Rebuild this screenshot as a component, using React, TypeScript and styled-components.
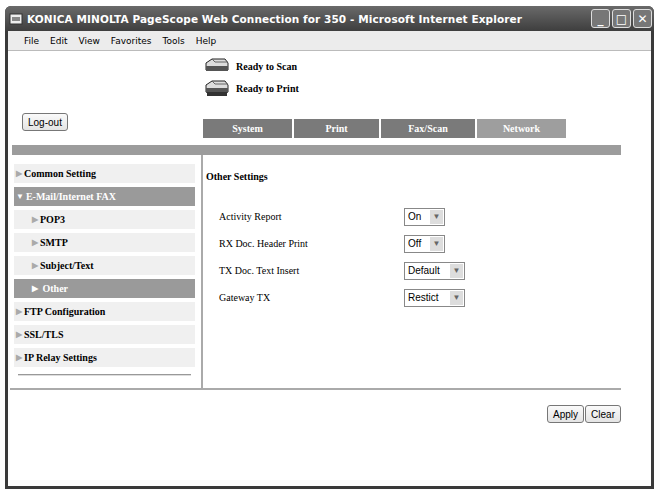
import React from 'react'
import styled, { createGlobalStyle } from 'styled-components'

const Global = createGlobalStyle`
  html, body { margin: 0; padding: 0; background: #fff; }
  body { width: 659px; height: 490px; overflow: hidden; }
`
const Window = styled.div`
  position: relative;
  margin: 6px 0 0 5px;
  width: 649px;
  height: 483px;
  background: #3a3a3a;
  border-radius: 6px 6px 0 0;
  padding: 0 3px 3px 3px;
  box-sizing: border-box;
  display: flex;
  flex-direction: column;
`
const TitleBar = styled.div`
  height: 25px;
  display: flex;
  align-items: center;
  padding-left: 4px;
  background: linear-gradient(#6a6a6a, #3e3e3e);
  border-radius: 6px 6px 0 0;
  margin: 0 -3px;
`
const TitleText = styled.div`
  font-family: "DejaVu Sans", sans-serif;
  font-weight: bold;
  font-size: 10.5px;
  color: #fff;
  margin-left: 4px;
  flex: 1;
  letter-spacing: 0.1px;
`
const WinBtn = styled.div`
  width: 17px;
  height: 17px;
  border: 1px solid #ddd;
  border-radius: 3px;
  background: #777;
  margin-right: 2px;
  color: #fff;
  font: bold 12px "DejaVu Sans", sans-serif;
  display: flex;
  align-items: center;
  justify-content: center;
`
const MenuBar = styled.div`
  height: 19px;
  background: #ececec;
  border-bottom: 1px solid #bbb;
  display: flex;
  align-items: center;
  padding-left: 16px;
  gap: 11px;
  font: 9px "DejaVu Sans", sans-serif;
  color: #000;
`
const Page = styled.div`
  flex: 1;
  background: #fff;
  font-family: "Liberation Serif", serif;
  display: flex;
  flex-direction: column;
`
const Header = styled.div`
  display: flex;
  height: 94px;
`
const LogoutCell = styled.div`
  width: 195px;
  display: flex;
  align-items: flex-end;
  padding: 0 0 14px 14px;
  box-sizing: border-box;
`
const Btn = styled.button`
  font: 10px "Liberation Sans", sans-serif;
  background: linear-gradient(#fafafa, #e4e4e4);
  border: 1px solid #777;
  border-radius: 3px;
  padding: 2px 5px;
  height: 18px;
`
const HeadRight = styled.div`
  display: flex;
  flex-direction: column;
  padding-top: 4px;
`
const Status = styled.div`
  display: flex;
  align-items: center;
  gap: 6px;
  height: 22px;
  font-weight: bold;
  font-size: 10px;
`
const Tabs = styled.div`
  display: flex;
  gap: 2px;
  margin-top: 20px;
`
const Tab = styled.div<{ w: number; light?: boolean }>`
  width: ${p => p.w}px;
  height: 19px;
  background: ${p => (p.light ? '#9e9e9e' : '#7a7a7a')};
  color: #fff;
  font-weight: bold;
  font-size: 10px;
  display: flex;
  align-items: center;
  justify-content: center;
`
const Bar = styled.div`
  height: 10px;
  background: #9c9c9c;
  margin: 0 30px 0 4px;
`
const Body = styled.div`
  display: flex;
  margin: 0 30px 0 2px;
  border-bottom: 2px solid #aaa;
`
const Nav = styled.div`
  width: 193px;
  border-right: 2px solid #aaa;
  padding: 9px 6px 12px 2px;
  display: flex;
  flex-direction: column;
  gap: 4px;
  box-sizing: border-box;
`
const NavItem = styled.div<{ sel?: boolean; sub?: boolean }>`
  height: 19px;
  margin-left: 2px;
  background: ${p => (p.sel ? '#9a9a9a' : '#f0f0f0')};
  color: ${p => (p.sel ? '#fff' : '#000')};
  font-weight: bold;
  font-size: 10px;
  display: flex;
  align-items: center;
  padding-left: ${p => (p.sub ? 18 : 2)}px;
  span { color: ${p => (p.sel ? '#fff' : '#aaa')}; font-size: 8px; margin-right: 2px; }
`
const NavEnd = styled.div`
  height: 1px;
  background: #999;
  border-bottom: 1px solid #ddd;
  margin: 3px 4px 0 6px;
`
const Content = styled.div`
  flex: 1;
  padding: 16px 0 0 3px;
`
const H = styled.div`
  font-weight: bold;
  font-size: 10px;
  margin-bottom: 21px;
`
const Row = styled.div`
  display: flex;
  align-items: center;
  height: 27px;
  padding-left: 13px;
  font-size: 10px;
`
const Label = styled.div`
  width: 185px;
`
const Select = styled.div`
  display: flex;
  align-items: center;
  border: 1px solid #888;
  height: 16px;
  font: 10px "Liberation Sans", sans-serif;
  padding-left: 3px;
  background: #fff;
`
const Arrow = styled.div`
  width: 13px;
  height: 14px;
  margin: 0 1px 0 4px;
  background: #ddd;
  color: #666;
  font-size: 8px;
  display: flex;
  align-items: center;
  justify-content: center;
`
const Footer = styled.div`
  display: flex;
  justify-content: flex-end;
  gap: 1px;
  margin: 15px 30px 0 0;
`

const Device = ({ printer }: { printer?: boolean }) => (
  <svg width="27" height="18" viewBox="0 0 27 18">
    <path d="M3 6 L9 2 H22 L25 6 V13 H3 Z" fill="#ddd" stroke="#222" />
    <rect x="3" y="9" width="22" height="5" fill="#555" />
    {printer && <rect x="4" y="13" width="20" height="4" fill="#333" />}
    <path d="M9 2 L12 5 H25" fill="none" stroke="#666" />
  </svg>
)

const rows: [string, string, number][] = [
  ['Activity Report', 'On', 18],
  ['RX Doc. Header Print', 'Off', 18],
  ['TX Doc. Text Insert', 'Default', 38],
  ['Gateway TX', 'Restict', 38],
]

export default function App() {
  return (
    <>
      <Global />
      <Window>
        <TitleBar>
          <svg width="14" height="14" viewBox="0 0 14 14"><rect x="1" y="2" width="12" height="10" fill="#eee" stroke="#333" /><rect x="3" y="5" width="8" height="4" fill="#888" /></svg>
          <TitleText>KONICA MINOLTA PageScope Web Connection for 350 - Microsoft Internet Explorer</TitleText>
          <WinBtn>_</WinBtn>
          <WinBtn>□</WinBtn>
          <WinBtn>✕</WinBtn>
        </TitleBar>
        <MenuBar>
          {['File', 'Edit', 'View', 'Favorites', 'Tools', 'Help'].map(m => <span key={m}>{m}</span>)}
        </MenuBar>
        <Page>
          <Header>
            <LogoutCell><Btn>Log-out</Btn></LogoutCell>
            <HeadRight>
              <Status><Device />Ready to Scan</Status>
              <Status><Device printer />Ready to Print</Status>
              <Tabs>
                <Tab w={89}>System</Tab>
                <Tab w={85}>Print</Tab>
                <Tab w={94}>Fax/Scan</Tab>
                <Tab w={89} light>Network</Tab>
              </Tabs>
            </HeadRight>
          </Header>
          <Bar />
          <Body>
            <Nav>
              <NavItem><span>▶</span>Common Setting</NavItem>
              <NavItem sel><span>▼</span>E-Mail/Internet FAX</NavItem>
              <NavItem sub><span>▶</span>POP3</NavItem>
              <NavItem sub><span>▶</span>SMTP</NavItem>
              <NavItem sub><span>▶</span>Subject/Text</NavItem>
              <NavItem sub sel><span>▶ </span>&nbsp;Other</NavItem>
              <NavItem><span>▶</span>FTP Configuration</NavItem>
              <NavItem><span>▶</span>SSL/TLS</NavItem>
              <NavItem><span>▶</span>IP Relay Settings</NavItem>
              <NavEnd />
            </Nav>
            <Content>
              <H>Other Settings</H>
              {rows.map(([l, v, w]) => (
                <Row key={l}>
                  <Label>{l}</Label>
                  <Select><span style={{ width: w }}>{v}</span><Arrow>▼</Arrow></Select>
                </Row>
              ))}
            </Content>
          </Body>
          <Footer><Btn>Apply</Btn><Btn>Clear</Btn></Footer>
        </Page>
      </Window>
    </>
  )
}
